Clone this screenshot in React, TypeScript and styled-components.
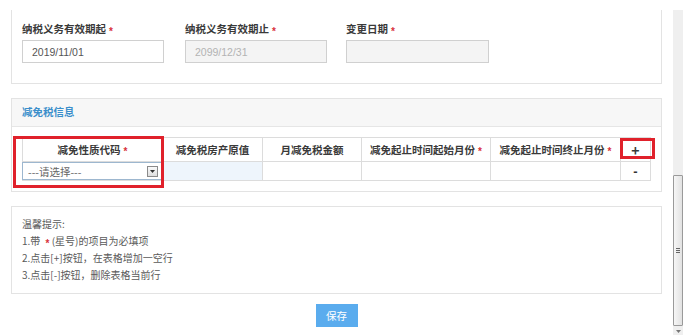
import styled, { createGlobalStyle } from "styled-components";

const GlobalStyle = createGlobalStyle`
  html, body {
    margin: 0;
    padding: 0;
    background: #fff;
  }
  body {
    font-family: "Liberation Sans", "Noto Sans CJK SC", sans-serif;
    font-size: 10.5px;
    color: #333;
  }
  * { box-sizing: border-box; }
`;

const columns = [
  { key: "code", label: "减免性质代码", required: true },
  { key: "orig", label: "减免税房产原值", required: false },
  { key: "month", label: "月减免税金额", required: false },
  { key: "start", label: "减免起止时间起始月份", required: true },
  { key: "end", label: "减免起止时间终止月份", required: true },
];

const tips = [
  "2.点击[+]按钮，在表格增加一空行",
  "3.点击[-]按钮，删除表格当前行",
];

export default function App() {
  return (
    <Page>
      <GlobalStyle />
      <Viewport>
        <FieldsPanel>
          <Field>
            <Label>
              纳税义务有效期起<Star>*</Star>
            </Label>
            <Input value="2019/11/01" readOnly />
          </Field>
          <Field>
            <Label>
              纳税义务有效期止<Star>*</Star>
            </Label>
            <Input value="2099/12/31" readOnly disabled />
          </Field>
          <Field>
            <Label>
              变更日期<Star>*</Star>
            </Label>
            <Input value="" readOnly disabled $wide />
          </Field>
        </FieldsPanel>

        <InfoPanel>
          <PanelHead>减免税信息</PanelHead>
          <TableWrap>
            <Row>
              {columns.map((c) => (
                <HeadCell key={c.key}>
                  {c.label}
                  {c.required && <Star>*</Star>}
                </HeadCell>
              ))}
              <HeadCell $op>+</HeadCell>
            </Row>
            <Row>
              <Cell>
                <Select>
                  <span>---请选择---</span>
                  <Caret>
                    <svg width="5" height="3" viewBox="0 0 5 3">
                      <path d="M0 0h5L2.5 3z" fill="#333" />
                    </svg>
                  </Caret>
                </Select>
              </Cell>
              <Cell $tint />
              <Cell />
              <Cell />
              <Cell />
              <Cell $op>-</Cell>
            </Row>
            <Mark style={{ left: -10, top: -2, width: 151, height: 52 }} />
            <Mark style={{ left: 597, top: 0, width: 35, height: 21 }} />
          </TableWrap>
        </InfoPanel>

        <TipsPanel>
          <TipLine>温馨提示:</TipLine>
          <TipLine>
            1.带 <Star>*</Star> (星号)的项目为必填项
          </TipLine>
          {tips.map((t) => (
            <TipLine key={t}>{t}</TipLine>
          ))}
        </TipsPanel>

        <Actions>
          <SaveButton>保存</SaveButton>
        </Actions>
      </Viewport>

      <ScrollTrack>
        <Thumb>
          <Grip />
        </Thumb>
        <DownArrow>
          <svg width="5" height="3" viewBox="0 0 5 3">
            <path d="M0 0h5L2.5 3z" fill="#777" />
          </svg>
        </DownArrow>
      </ScrollTrack>
    </Page>
  );
}

const Page = styled.div`
  display: flex;
  align-items: flex-start;
  width: 692px;
  height: 335px;
  padding-top: 10px;
  overflow: hidden;
`;

const Viewport = styled.div`
  width: 662px;
  padding-left: 11px;
  display: flex;
  flex-direction: column;
`;

const FieldsPanel = styled.div`
  display: grid;
  grid-template-columns: 163px 161px 160px;
  padding: 12px 10px 20px;
  border: 1px solid #e3e3e3;
  border-top: 0;
`;

const Field = styled.div`
  display: flex;
  flex-direction: column;
  gap: 3px;
`;

const Label = styled.div`
  font-family: "Noto Sans CJK SC", sans-serif;
  font-size: 10.5px;
  line-height: 14px;
  font-weight: 700;
  color: #3a3a3a;
`;

const Star = styled.span`
  color: #d8303a;
  font-family: "Liberation Sans", sans-serif;
  font-weight: 700;
  margin-left: 3px;
  font-size: 10px;
  position: relative;
  top: 2px;
`;

const Input = styled.input<{ $wide?: boolean }>`
  width: ${(p) => (p.$wide ? "143px" : "142px")};
  height: 23px;
  margin: 0;
  padding: 0 9px;
  border: 1px solid #d0d0d0;
  border-radius: 0;
  background: #fff;
  font-family: "Liberation Sans", sans-serif;
  font-size: 10.5px;
  color: #555;
  outline: none;
  &:disabled {
    background: #f4f4f4;
    color: #b3b3b3;
  }
`;

const InfoPanel = styled.div`
  margin-top: 14px;
  border: 1px solid #e3e3e3;
  padding-bottom: 10px;
`;

const PanelHead = styled.div`
  height: 28px;
  line-height: 26px;
  padding-left: 10px;
  background: #f7f7f7;
  border-bottom: 1px solid #e6e6e6;
  font-family: "Noto Sans CJK SC", sans-serif;
  font-weight: 700;
  font-size: 10.5px;
  color: #3b8fcb;
`;

const TableWrap = styled.div`
  position: relative;
  margin: 10px 0 0 10px;
  width: 629px;
  border-left: 1px solid #dcdcdc;
  border-top: 1px solid #dcdcdc;
`;

const Row = styled.div`
  display: grid;
  grid-template-columns: 140px 100px 99px 129px 130px 30px;
`;

const HeadCell = styled.div<{ $op?: boolean }>`
  height: 24px;
  display: flex;
  align-items: center;
  justify-content: center;
  border-right: 1px solid #dcdcdc;
  border-bottom: 1px solid #dcdcdc;
  font-family: "Noto Sans CJK SC", sans-serif;
  font-weight: 700;
  font-size: ${(p) => (p.$op ? "14px" : "10.5px")};
  color: #3a3a3a;
  white-space: nowrap;
`;

const Cell = styled.div<{ $tint?: boolean; $op?: boolean }>`
  height: 19px;
  display: flex;
  align-items: center;
  justify-content: center;
  border-right: 1px solid #dcdcdc;
  border-bottom: 1px solid #dcdcdc;
  background: ${(p) => (p.$tint ? "#eef5fc" : "#fff")};
  font-weight: 700;
  font-size: 13px;
  color: #333;
  position: relative;
`;

const Select = styled.div`
  position: absolute;
  left: -1px;
  top: 0;
  width: 141px;
  height: 18px;
  display: flex;
  align-items: center;
  justify-content: space-between;
  padding: 0 4px 0 5px;
  border: 1px solid #9db7cf;
  background: #fff;
  font-family: "Noto Sans CJK SC", sans-serif;
  font-weight: 400;
  font-size: 10.5px;
  color: #666;
`;

const Caret = styled.span`
  width: 11px;
  height: 11px;
  display: flex;
  align-items: center;
  justify-content: center;
  border: 1px solid #8a8a8a;
  background: linear-gradient(#fafafa, #dedede);
`;

const Mark = styled.div`
  position: absolute;
  border: 3px solid #e0212b;
  pointer-events: none;
`;

const TipsPanel = styled.div`
  margin-top: 14px;
  border: 1px solid #e3e3e3;
  padding: 9px 10px 10px;
`;

const TipLine = styled.div`
  font-family: "Noto Sans CJK SC", sans-serif;
  font-size: 10px;
  line-height: 16.5px;
  color: #5a5a5a;
`;

const Actions = styled.div`
  display: flex;
  justify-content: center;
  margin-top: 10px;
`;

const SaveButton = styled.button`
  width: 42px;
  height: 23px;
  border: 0;
  border-radius: 0;
  padding: 0;
  background: #5aacee;
  color: #fff;
  font-family: "Noto Sans CJK SC", sans-serif;
  font-size: 10.5px;
  cursor: pointer;
`;

const ScrollTrack = styled.div`
  margin-left: 11px;
  width: 10px;
  height: 325px;
  background: #efefef;
  display: flex;
  flex-direction: column;
  justify-content: flex-end;
`;

const Thumb = styled.div`
  height: 151px;
  margin-bottom: 1px;
  border: 1px solid #9a9a9a;
  border-radius: 1px;
  background: linear-gradient(90deg, #f6f6f6, #e2e2e2);
  display: flex;
  align-items: center;
  justify-content: center;
`;

const Grip = styled.div`
  width: 4px;
  height: 5px;
  border-top: 1px solid #666;
  border-bottom: 1px solid #666;
  position: relative;
  &::after {
    content: "";
    position: absolute;
    left: 0;
    right: 0;
    top: 1px;
    border-top: 1px solid #666;
  }
`;

const DownArrow = styled.div`
  height: 8px;
  display: flex;
  align-items: center;
  justify-content: center;
`;
